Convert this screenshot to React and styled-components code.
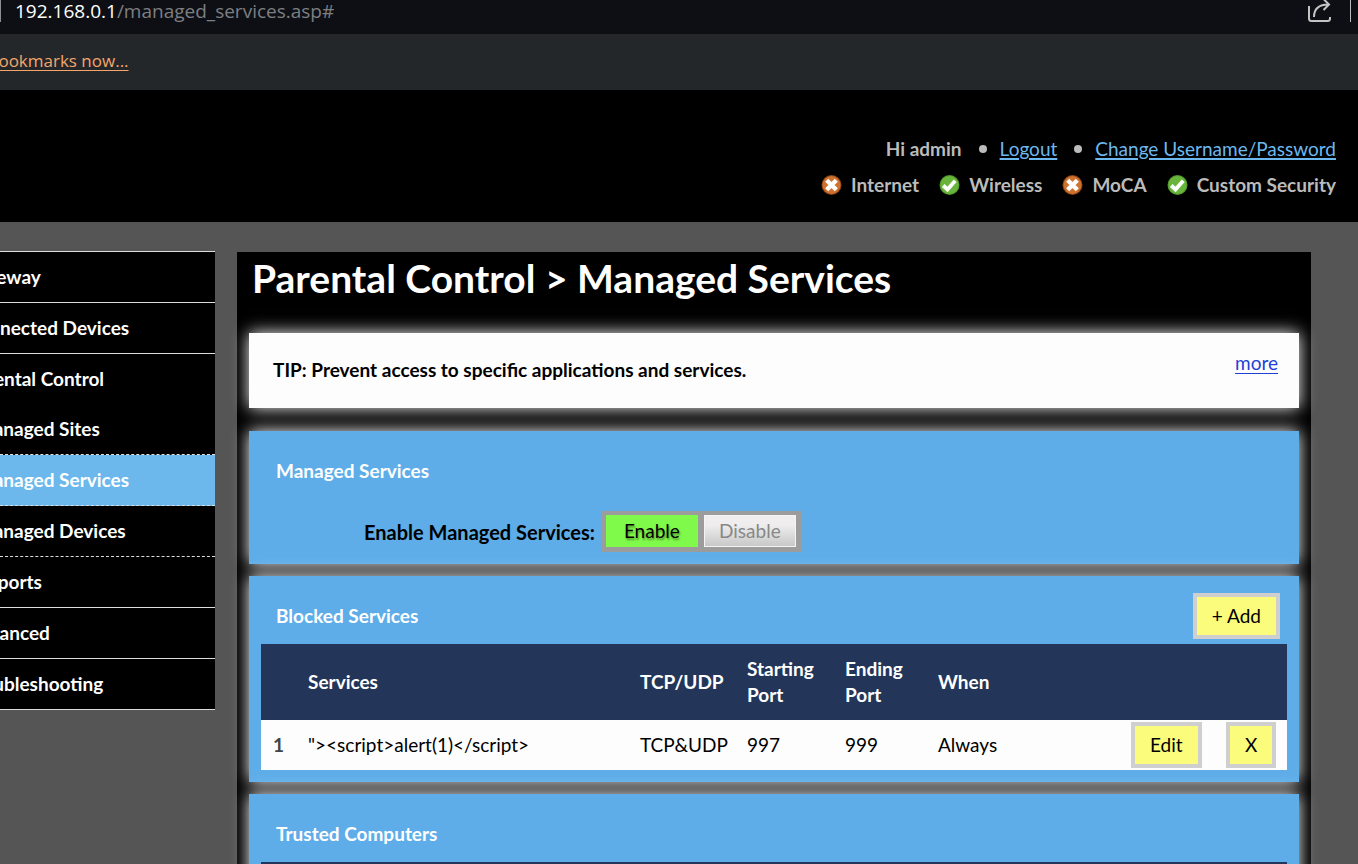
import React from "react";
import styled, { createGlobalStyle } from "styled-components";

const GlobalStyle = createGlobalStyle`
  *, *::before, *::after { box-sizing: border-box; }
  body {
    margin: 0;
    background: #555;
    font-family: Lato, "Liberation Sans", sans-serif;
    font-size: 19px;
    line-height: 26px;
    color: #000;
  }
  button { font: inherit; cursor: pointer; }
`;

const Page = styled.div`
  height: 100vh;
  overflow: hidden;
`;

/* Browser chrome */
const AddressBar = styled.div`
  display: flex;
  justify-content: space-between;
  align-items: flex-start;
  height: 34px;
  padding-right: 7px;
  background: #0e0f14;
  font-family: "Open Sans", sans-serif;
  line-height: 22px;
`;

const Url = styled.div`
  height: 22px;
  padding-left: 14px;
  border-left: 1px solid #8b8d90;
  color: #7d7f82;
  white-space: nowrap;
`;

const Host = styled.span`
  color: #fff;
  font-weight: 500;
`;

const ShareArea = styled.div`
  display: flex;
  height: 22px;
  padding-right: 18px;
  border-right: 1px solid #b9bcbf;
`;

const ShareButton = styled.button`
  display: flex;
  padding: 0;
  border: 0;
  background: none;
`;

const BookmarksBar = styled.div`
  display: flex;
  align-items: center;
  height: 56px;
  padding-bottom: 2px;
  background: #23272a;
  font-family: "Open Sans", sans-serif;
  font-size: 17px;
`;

const BookmarkLink = styled.a`
  margin-left: -12px;
  color: #f5a56b;
  white-space: nowrap;
  text-underline-offset: 3px;
`;

/* Gateway header */
const Header = styled.header`
  display: flex;
  flex-direction: column;
  align-items: flex-end;
  gap: 10px;
  height: 132px;
  padding: 46px 22px 0 0;
  background: #000;
  color: #bbb;
`;

const UserRow = styled.div`
  display: flex;
  align-items: center;
`;

const UserName = styled.span`
  font-weight: 700;
`;

const Bullet = styled.span`
  width: 8px;
  height: 8px;
  margin: 0 13px 0 17px;
  border-radius: 50%;
  background: #bbb;
`;

const HeaderLink = styled.a`
  color: #6cb8ee;
  text-decoration-thickness: 2px;
  text-underline-offset: 2px;
`;

const StatusRow = styled.ul`
  display: flex;
  gap: 20px;
  margin: 0;
  padding: 0;
  list-style: none;
  font-weight: 700;
`;

const StatusItem = styled.li`
  display: flex;
  align-items: center;
  gap: 9px;
`;

/* Body layout */
const Body = styled.div`
  display: flex;
  align-items: flex-start;
  gap: 22px;
  padding: 29px 47px 0 0;
`;

const Nav = styled.nav`
  flex: none;
  width: 215px;
  overflow: hidden;
  border-top: 1px solid #ddd;
  background: #000;
`;

const NavLink = styled.a`
  display: block;
  border-bottom: ${(p) => (p.$line ? `1px ${p.$line} #ddd` : "0")};
  background: ${(p) => (p.$active ? "#6cb8ec" : "#000")};
  color: #fff;
  font-weight: 700;
  line-height: 50px;
  text-decoration: none;
  white-space: nowrap;
`;

const NavText = styled.span`
  margin-left: ${(p) => (p.$sub ? "-24px" : "-34px")};
`;

const Content = styled.main`
  flex: 1;
  min-width: 0;
  margin-top: 1px;
  padding: 0 12px 12px;
  background: #000;
`;

const Title = styled.h1`
  margin: 0;
  padding: 0 3px 29px;
  color: #fff;
  font-size: 39px;
  line-height: 52px;
  white-space: nowrap;
`;

const Tip = styled.section`
  display: flex;
  justify-content: space-between;
  margin-bottom: 23px;
  padding: 17px 21px 25px 24px;
  background: #fdfdfd;
  box-shadow: 0 0 16px #fff;
`;

const TipText = styled.p`
  margin: 7px 0 0;
  font-weight: 700;
`;

const TipLink = styled.a`
  color: #1f3fd8;
  text-underline-offset: 3px;
`;

const Card = styled.section`
  margin-bottom: 12px;
  padding: 0 12px 12px;
  background: #5eade9;
  box-shadow: 0 0 16px #fff;
`;

const CardHead = styled.div`
  display: flex;
  align-items: center;
  justify-content: space-between;
  height: 68px;
  padding: 12px 7px 0 15px;
`;

const CardTitle = styled.h2`
  margin: 0;
  color: #fff;
  font-size: 19px;
`;

const ToggleRow = styled.div`
  display: flex;
  align-items: center;
  gap: 6px;
  padding: 12px 0 0 103px;
`;

const ToggleLabel = styled.span`
  font-size: 20px;
  font-weight: 700;
`;

const ToggleGroup = styled.div`
  display: flex;
  gap: 6px;
  padding: 4px 5px 5px;
  background: #9c9c9c;
`;

const ToggleButton = styled.button`
  width: 92px;
  height: 32px;
  padding: 0;
  border: 1px solid ${(p) => (p.$on ? "#80fa4a" : "#f4f4f4")};
  background: ${(p) => (p.$on ? "#80fa4a" : "linear-gradient(#efedee 30%, #c8c8c8)")};
  color: ${(p) => (p.$on ? "#000" : "#888")};
  text-shadow: ${(p) => (p.$on ? "1px 2px 2px rgba(0, 0, 0, 0.4)" : "none")};
`;

const ActionButton = styled.button`
  height: 46px;
  padding: 0 15px;
  border: 4px solid #cfcfcf;
  background: #fbfb7c;
  color: #000;
  white-space: nowrap;
`;

const Table = styled.table`
  width: 100%;
  border-collapse: collapse;
  table-layout: fixed;
  text-align: left;
`;

const Col = styled.col`
  width: ${(p) => (p.$w ? `${p.$w}px` : "auto")};
`;

const HeadCell = styled.th`
  height: 76px;
  padding: 0 12px;
  background: #233659;
  color: #fff;
`;

const Cell = styled.td`
  height: 50px;
  padding: 0 12px;
  background: #fdfdfd;
`;

const RowNumber = styled.th`
  padding: 0 12px;
  background: #fdfdfd;
  color: #444;
`;

const TableStrip = styled.div`
  height: 76px;
  background: #233659;
`;

const NAV = [
  { label: "Gateway", line: "solid" },
  { label: "Connected Devices", line: "solid" },
  { label: "Parental Control" },
  { label: "Managed Sites", line: "dashed", sub: true },
  { label: "Managed Services", line: "dashed", sub: true, active: true },
  { label: "Managed Devices", line: "dashed", sub: true },
  { label: "Reports", line: "solid", sub: true },
  { label: "Advanced", line: "solid" },
  { label: "Troubleshooting", line: "solid" },
];

const STATUS = [
  { label: "Internet", ok: false },
  { label: "Wireless", ok: true },
  { label: "MoCA", ok: false },
  { label: "Custom Security", ok: true },
];

function StatusIcon({ ok }) {
  return (
    <svg width="21" height="21" viewBox="0 0 21 21" aria-hidden="true">
      <circle cx="10.5" cy="10" r="10" fill={ok ? "#4f9a2c" : "#8f4413"} />
      <circle cx="10.5" cy="10" r="9" fill={ok ? "#69b53b" : "#cf712f"} />
      {ok ? (
        <path d="M4.200 10.500l4.300 4 7.700-8.800" fill="none" stroke="#fff" strokeWidth="3.800" />
      ) : (
        <path d="M5.700 5.200l9.600 9.600M15.300 5.200l-9.600 9.600" fill="none" stroke="#fff" strokeWidth="4.400" />
      )}
    </svg>
  );
}

function ShareIcon() {
  return (
    <svg width="24" height="22" viewBox="0 0 24 22" fill="none" stroke="#c4c4c4" strokeWidth="2" aria-hidden="true">
      <path d="M1 6v12.500q0 2.500 2.500 2.500H19.500q2.500 0 2.500-2.500V17" />
      <path d="M6 17C6 9 10 4.500 20.500 4.500M15.500-1l5.500 5.500-5.500 5.500" />
    </svg>
  );
}

export default function App() {
  return (
    <Page>
      <GlobalStyle />
      <AddressBar>
        <Url>
          <Host>192.168.0.1</Host>/managed_services.asp#
        </Url>
        <ShareArea>
          <ShareButton aria-label="Share">
            <ShareIcon />
          </ShareButton>
        </ShareArea>
      </AddressBar>
      <BookmarksBar>
        <BookmarkLink href="#">bookmarks now...</BookmarkLink>
      </BookmarksBar>

      <Header>
        <UserRow>
          <UserName>Hi admin</UserName>
          <Bullet />
          <HeaderLink href="#">Logout</HeaderLink>
          <Bullet />
          <HeaderLink href="#">Change Username/Password</HeaderLink>
        </UserRow>
        <StatusRow>
          {STATUS.map((s) => (
            <StatusItem key={s.label}>
              <StatusIcon ok={s.ok} />
              {s.label}
            </StatusItem>
          ))}
        </StatusRow>
      </Header>

      <Body>
        <Nav>
          {NAV.map((n) => (
            <NavLink key={n.label} href="#" $line={n.line} $active={n.active}>
              <NavText $sub={n.sub}>{n.label}</NavText>
            </NavLink>
          ))}
        </Nav>

        <Content>
          <Title>Parental Control &gt; Managed Services</Title>

          <Tip>
            <TipText>TIP: Prevent access to specific applications and services.</TipText>
            <TipLink href="#">more</TipLink>
          </Tip>

          <Card>
            <CardHead>
              <CardTitle>Managed Services</CardTitle>
            </CardHead>
            <ToggleRow>
              <ToggleLabel id="enable-label">Enable Managed Services:</ToggleLabel>
              <ToggleGroup role="group" aria-labelledby="enable-label">
                <ToggleButton $on aria-pressed="true">Enable</ToggleButton>
                <ToggleButton aria-pressed="false">Disable</ToggleButton>
              </ToggleGroup>
            </ToggleRow>
          </Card>

          <Card>
            <CardHead>
              <CardTitle>Blocked Services</CardTitle>
              <ActionButton>+ Add</ActionButton>
            </CardHead>
            <Table>
              <colgroup>
                <Col $w={35} />
                <Col />
                <Col $w={107} />
                <Col $w={98} />
                <Col $w={93} />
                <Col $w={193} />
                <Col $w={95} />
                <Col $w={73} />
              </colgroup>
              <thead>
                <tr>
                  <HeadCell />
                  <HeadCell>Services</HeadCell>
                  <HeadCell>TCP/UDP</HeadCell>
                  <HeadCell>Starting Port</HeadCell>
                  <HeadCell>Ending Port</HeadCell>
                  <HeadCell>When</HeadCell>
                  <HeadCell />
                  <HeadCell />
                </tr>
              </thead>
              <tbody>
                <tr>
                  <RowNumber scope="row">1</RowNumber>
                  <Cell>{'"><script>alert(1)</script>'}</Cell>
                  <Cell>TCP&amp;UDP</Cell>
                  <Cell>997</Cell>
                  <Cell>999</Cell>
                  <Cell>Always</Cell>
                  <Cell>
                    <ActionButton>Edit</ActionButton>
                  </Cell>
                  <Cell>
                    <ActionButton>X</ActionButton>
                  </Cell>
                </tr>
              </tbody>
            </Table>
          </Card>

          <Card>
            <CardHead>
              <CardTitle>Trusted Computers</CardTitle>
            </CardHead>
            <TableStrip />
          </Card>
        </Content>
      </Body>
    </Page>
  );
}
